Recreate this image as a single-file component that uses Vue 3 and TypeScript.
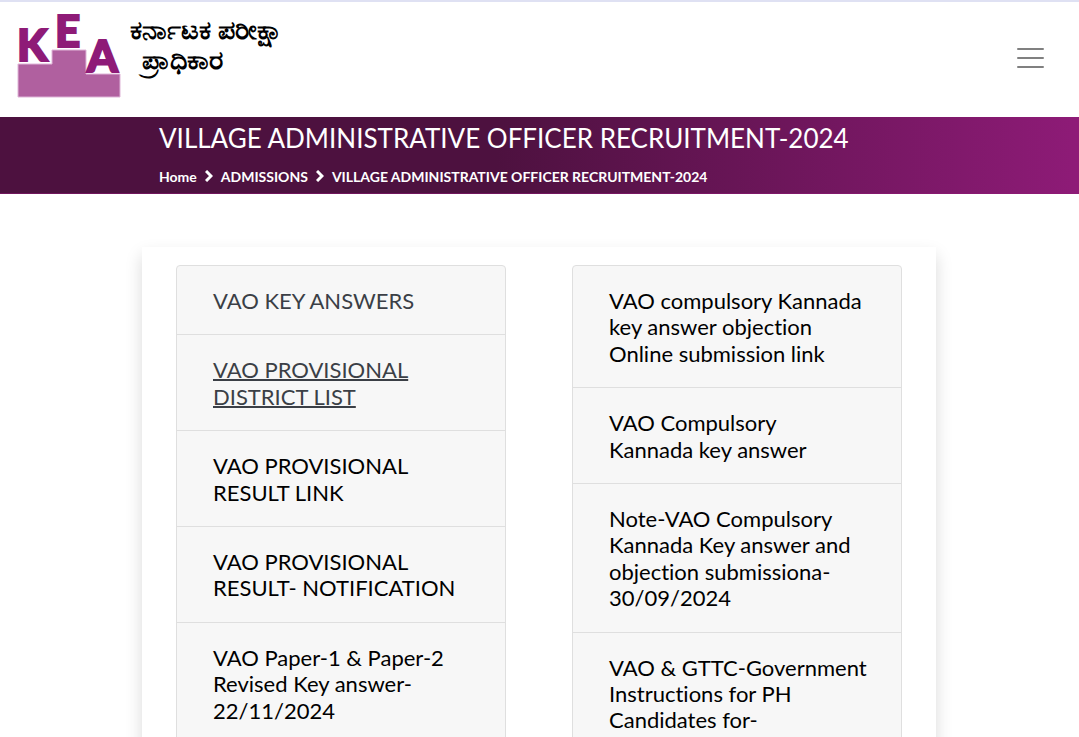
<script setup lang="ts">
interface Notice {
  text: string
  state?: 'muted' | 'hovered'
}

const columns: Notice[][] = [
  [
    { text: 'VAO KEY ANSWERS', state: 'muted' },
    { text: 'VAO PROVISIONAL DISTRICT LIST', state: 'hovered' },
    { text: 'VAO PROVISIONAL RESULT LINK' },
    { text: 'VAO PROVISIONAL RESULT- NOTIFICATION' },
    { text: 'VAO Paper-1 & Paper-2 Revised Key answer-22/11/2024' },
  ],
  [
    { text: 'VAO compulsory Kannada key answer objection Online submission link' },
    { text: 'VAO Compulsory\nKannada key answer' },
    { text: 'Note-VAO Compulsory Kannada Key answer and objection submissiona-30/09/2024' },
    { text: 'VAO & GTTC-Government Instructions for PH Candidates for-' },
  ],
]
</script>

<template>
  <div class="page">
    <header class="header">
      <a class="brand" href="#">
        <svg class="logo" viewBox="0 0 104 86" role="img" aria-label="KEA">
          <path d="M1 52H35V38H69V62H103V85H1Z" fill="#b0609f" stroke="#dfb5d8" stroke-width="1" />
          <g class="logo-letters">
            <text x="0" y="49">K</text>
            <text x="38" y="35">E</text>
            <text x="70" y="60">A</text>
          </g>
        </svg>
        <span class="brand-name" lang="kn">
          <span>ಕರ್ನಾಟಕ ಪರೀಕ್ಷಾ</span>
          <span>ಪ್ರಾಧಿಕಾರ</span>
        </span>
      </a>
      <button class="menu" type="button" aria-label="Menu">
        <svg viewBox="0 0 30 30" aria-hidden="true">
          <path d="M3 6H28M3 15H28M3 24H28" stroke="#808080" stroke-width="2" stroke-linecap="round" />
        </svg>
      </button>
    </header>

    <section class="banner">
      <h1>VILLAGE ADMINISTRATIVE OFFICER RECRUITMENT-2024</h1>
      <nav class="crumbs" aria-label="Breadcrumb">
        <a href="#">Home</a>
        <svg viewBox="0 0 8 12" aria-hidden="true"><path d="M1 1L6 6L1 11" /></svg>
        <a href="#">ADMISSIONS</a>
        <svg viewBox="0 0 8 12" aria-hidden="true"><path d="M1 1L6 6L1 11" /></svg>
        <a href="#">VILLAGE ADMINISTRATIVE OFFICER RECRUITMENT-2024</a>
      </nav>
    </section>

    <main class="card">
      <ul v-for="(items, c) in columns" :key="c" class="list">
        <li v-for="item in items" :key="item.text">
          <a href="#" :class="item.state">{{ item.text }}</a>
        </li>
      </ul>
    </main>
  </div>
</template>

<style>
body {
  margin: 0;
  background: #fff;
}
</style>

<style scoped>
.page {
  box-sizing: border-box;
  height: 100vh;
  overflow-x: hidden;
  overflow-y: auto;
  scrollbar-width: none;
  border-top: 2px solid #dfe1f3;
  font-family: Lato, "Noto Sans", sans-serif;
  font-variant-ligatures: no-common-ligatures;
  color: #000;
}
a {
  color: inherit;
  text-decoration: none;
}
.header {
  display: flex;
  justify-content: space-between;
  align-items: center;
  box-sizing: border-box;
  min-height: 115px;
  padding: 0 34px 4px 17px;
}
.brand {
  display: flex;
  align-items: flex-start;
  gap: 9px;
  padding-bottom: 6px;
}
.logo {
  width: 104px;
  height: 86px;
  overflow: visible;
}
.logo-letters {
  font-family: Lato, sans-serif;
  font-size: 44px;
  font-weight: 900;
  fill: #8e1b77;
  stroke: #8e1b77;
  stroke-width: 2;
}
.brand-name {
  display: flex;
  flex-direction: column;
  align-items: flex-start;
  padding-top: 2px;
  font-size: 27px;
  font-weight: 700;
  line-height: 30px;
  white-space: nowrap;
}
.brand-name span + span {
  padding-left: 12px;
}
.menu {
  display: flex;
  padding: 0;
  border: 0;
  background: none;
}
.menu svg {
  width: 30px;
  height: 30px;
}
.banner {
  box-sizing: border-box;
  padding: 5px 159px 6px;
  background: linear-gradient(90deg, #4d113f 0%, #4d113f 46%, #8e1b77 100%);
  border-bottom: 1px solid #8e1b7788;
  color: #fff;
}
.banner h1 {
  margin: 0;
  font-size: 26px;
  line-height: 32px;
  font-weight: 400;
  white-space: nowrap;
}
.crumbs {
  display: flex;
  align-items: center;
  gap: 8px;
  padding-top: 13px;
  font-size: 14px;
  line-height: 20px;
  font-weight: 700;
  white-space: nowrap;
}
.crumbs svg {
  width: 8px;
  height: 12px;
  margin-bottom: 2px;
  fill: none;
  stroke: #fff;
  stroke-width: 3;
}
.card {
  display: grid;
  grid-template-columns: 1fr 1fr;
  align-items: start;
  gap: 66px;
  margin: 53px 143px 48px 142px;
  padding: 18px 34px;
  background: #fff;
  box-shadow: 0 8px 16px rgba(0, 0, 0, 0.15);
}
.list {
  margin: 0;
  padding: 0;
  list-style: none;
  border: 1px solid #dfdfdf;
  border-radius: 4px;
  background: #f7f7f7;
}
.list li {
  padding: 22px 28px 20px 36px;
  font-size: 22px;
  line-height: 1.2;
  white-space: pre-line;
}
.list li + li {
  border-top: 1px solid #dfdfdf;
}
.muted,
.hovered {
  color: #3b3f46;
}
.hovered {
  text-decoration: underline;
  text-decoration-thickness: 2px;
}
</style>
